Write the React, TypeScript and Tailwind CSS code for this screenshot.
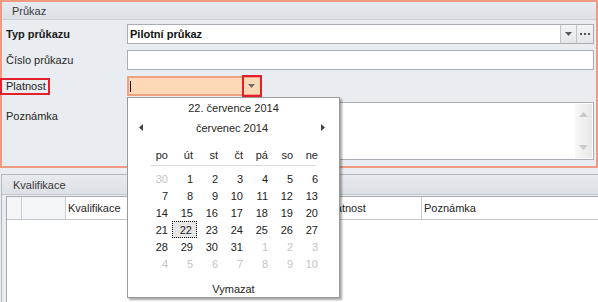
import { ReactNode } from 'react';

const weekDays = ['po', 'út', 'st', 'čt', 'pá', 'so', 'ne'];

// [day, inCurrentMonth]
const calendarDays: [number, boolean][] = [
  [30, false], [1, true], [2, true], [3, true], [4, true], [5, true], [6, true],
  [7, true], [8, true], [9, true], [10, true], [11, true], [12, true], [13, true],
  [14, true], [15, true], [16, true], [17, true], [18, true], [19, true], [20, true],
  [21, true], [22, true], [23, true], [24, true], [25, true], [26, true], [27, true],
  [28, true], [29, true], [30, true], [31, true], [1, false], [2, false], [3, false],
  [4, false], [5, false], [6, false], [7, false], [8, false], [9, false], [10, false],
];

const DownArrow = ({ color = '#5a5a5a' }: { color?: string }) => (
  <svg width="7" height="4" viewBox="0 0 7 4">
    <path d="M0 0H7L3.5 4Z" fill={color} />
  </svg>
);

const Label = ({ children, bold }: { children: ReactNode; bold?: boolean }) => (
  <div className={`w-[121px] shrink-0 ${bold ? 'font-bold text-[#1a1a1a]' : ''}`}>{children}</div>
);

const DatePopup = () => (
  <div className="absolute left-[127px] top-[97px] w-[213px] h-[201px] bg-white border border-[#9a9a9a] shadow-[2px_2px_2px_rgba(0,0,0,0.35)] flex flex-col">
    <div className="h-[19px] flex items-center justify-center">22. července 2014</div>
    <div className="h-[21px] flex items-center pl-[11px] pr-[14px]">
      <svg width="4" height="7" viewBox="0 0 4 7">
        <path d="M4 0V7L0 3.5Z" fill="#444" />
      </svg>
      <div className="flex-1 text-center">červenec 2014</div>
      <svg width="4" height="7" viewBox="0 0 4 7">
        <path d="M0 0V7L4 3.5Z" fill="#444" />
      </svg>
    </div>
    <div className="ml-[19px] mt-[8px] grid grid-cols-[repeat(7,25px)] h-[18px] items-center">
      {weekDays.map((d) => (
        <div key={d} className="text-right pr-[4px]">
          {d}
        </div>
      ))}
    </div>
    <div className="ml-[23px] mt-[1px] w-[165px] h-px bg-[#dadada]" />
    <div className="ml-[19px] mt-[4px] grid grid-cols-[repeat(7,25px)] auto-rows-[17px]">
      {calendarDays.map(([day, current], i) => (
        <div
          key={i}
          className={`flex items-center justify-end pr-[4px] ${
            current ? 'text-[#222]' : 'text-[#c4c4c4]'
          } ${i === 22 ? 'bg-[#e6e6e6] border border-dotted border-black pr-[3px]' : ''}`}
        >
          {day}
        </div>
      ))}
    </div>
    <div className="mt-[8px] h-[17px] flex items-center justify-center">Vymazat</div>
  </div>
);

const App = () => {
  return (
    <div className="relative w-[598px] h-[302px] overflow-hidden bg-[#e9ecf0] text-[11px] leading-[14px] text-[#262626] font-['Liberation_Sans',Arial,sans-serif]">
      {/* Průkaz group */}
      <section className="h-[168px] border-2 border-[#ee9b80] flex flex-col">
        <div className="h-[18px] shrink-0 bg-gradient-to-b from-[#e7eaee] to-[#dde1e6] border-b border-[#cdd1d7] pl-[10px] flex items-center text-[#3a3a3a]">
          Průkaz
        </div>
        <div className="flex flex-col gap-[6px] pt-[4px] pl-[4px] pr-[2px]">
          <div className="flex items-center h-[20px]">
            <Label bold>Typ průkazu</Label>
            <div className="flex-1 h-full flex bg-white border border-[#a9aeb5]">
              <div className="flex-1 pl-[2px] flex items-center font-bold text-[#111]">Pilotní průkaz</div>
              <div className="w-[16px] border-l border-[#c3c7cc] bg-gradient-to-b from-[#f3f4f6] to-[#e4e6e9] flex items-center justify-center">
                <DownArrow />
              </div>
              <div className="w-[17px] border-l border-[#c3c7cc] bg-gradient-to-b from-[#f3f4f6] to-[#e4e6e9] flex items-center justify-center gap-[2px]">
                <span className="w-[2px] h-[2px] bg-[#555]" />
                <span className="w-[2px] h-[2px] bg-[#555]" />
                <span className="w-[2px] h-[2px] bg-[#555]" />
              </div>
            </div>
          </div>

          <div className="flex items-center h-[20px]">
            <Label>Číslo průkazu</Label>
            <div className="flex-1 h-full bg-white border border-[#a9aeb5]" />
          </div>

          <div className="flex items-center h-[20px]">
            <div className="relative w-[121px] shrink-0">
              Platnost
              <span className="absolute left-[-6px] top-[-1px] w-[50px] h-[17px] border-2 border-[#e3202b]" />
            </div>
            <div className="relative w-[135px] h-full flex bg-[#fdd9b6] border-2 border-[#f0a183]">
              <div className="flex-1 flex items-center pl-[1px]">
                <span className="w-px h-[11px] bg-[#111]" />
              </div>
              <div className="w-[17px] flex items-center justify-center">
                <DownArrow color="#6a6a6a" />
              </div>
              <span className="absolute right-[-2px] top-[-3px] w-[20px] h-[22px] border-2 border-[#e3202b]" />
            </div>
          </div>

          <div className="flex h-[58px]">
            <div className="w-[121px] shrink-0 pt-[7px]">Poznámka</div>
            <div className="flex-1 flex justify-end bg-white border border-[#a9aeb5] pr-[1px] py-px">
              <div className="w-[17px] bg-gradient-to-r from-[#f7f7f7] to-[#e9e9e9] flex flex-col items-center justify-between py-[8px]">
                <svg width="9" height="5" viewBox="0 0 9 5">
                  <path d="M0 5H9L4.5 0Z" fill="#c9c9c9" />
                </svg>
                <svg width="9" height="5" viewBox="0 0 9 5">
                  <path d="M0 0H9L4.5 5Z" fill="#c9c9c9" />
                </svg>
              </div>
            </div>
          </div>
        </div>
      </section>

      {/* Kvalifikace group */}
      <section className="mt-[6px] ml-px h-[128px] border-l border-t border-[#b3b8bf] flex flex-col">
        <div className="h-[20px] shrink-0 bg-gradient-to-b from-[#e7eaee] to-[#dde1e6] border-b border-[#c4c8ce] pl-[11px] flex items-center text-[#3a3a3a]">
          Kvalifikace
        </div>
        <div className="flex-1 pt-px pl-[4px]">
          <div className="h-full bg-white border-l border-t border-[#a8acb2]">
            <div className="h-[23px] flex border-b border-[#c3c6cb]">
              <div className="w-[15px] border-r border-[#c9ccd0] bg-[#f4f5f7]" />
              <div className="w-[44px] border-r border-[#c9ccd0] bg-[#f4f5f7]" />
              <div className="w-[258px] border-r border-[#c9ccd0] pl-[2px] flex items-center">Kvalifikace</div>
              <div className="w-[98px] border-r border-[#c9ccd0] pl-[2px] flex items-center">Platnost</div>
              <div className="flex-1 pl-[2px] flex items-center">Poznámka</div>
            </div>
          </div>
        </div>
      </section>

      <DatePopup />
    </div>
  );
};

export default App;
